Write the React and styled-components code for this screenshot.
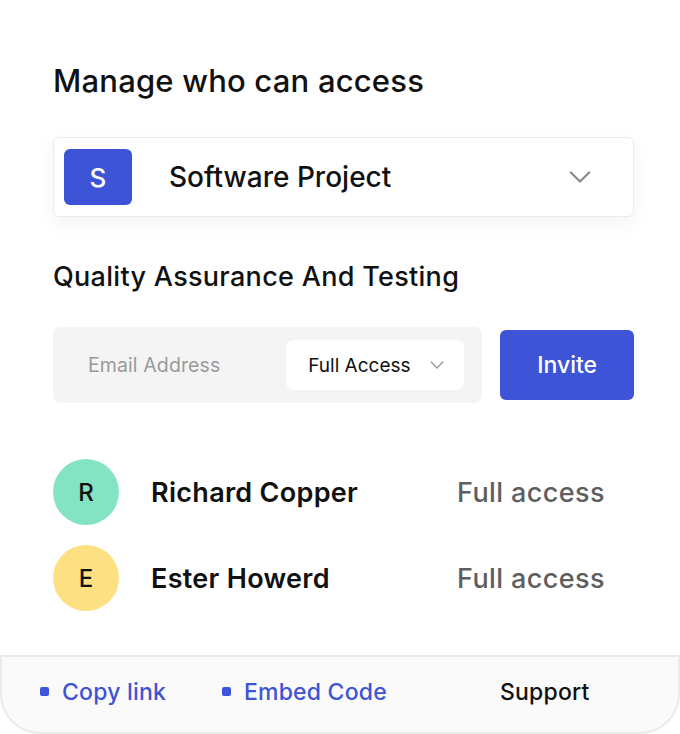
import React from 'react';
import styled, { createGlobalStyle } from 'styled-components';

const GlobalStyle = createGlobalStyle`
    html, body {
        margin: 0;
        padding: 0;
        background: #fff;
        font-family: Inter, 'Noto Sans', sans-serif;
    }
`;

const Page = styled.div`
    width: 680px;
    height: 734px;
    display: flex;
    flex-direction: column;
    box-sizing: border-box;
`;

const Body = styled.div`
    flex: 1;
    padding: 62px 46px 0 53px;
`;

const Title = styled.h1`
    font-size: 31px;
    font-weight: 500;
    color: #111;
    margin: 0;
    letter-spacing: 0.2px;
`;

const ProjectSelect = styled.div`
    margin-top: 38px;
    height: 80px;
    box-sizing: border-box;
    border: 1px solid #ececec;
    border-radius: 6px;
    box-shadow: 0 6px 22px rgba(0, 0, 0, 0.05);
    display: flex;
    align-items: center;
    padding: 0 42px 0 10px;
`;

const ProjectBadge = styled.div`
    width: 68px;
    height: 56px;
    border-radius: 6px;
    background: #3e54d6;
    color: #fff;
    font-size: 26px;
    font-weight: 500;
    display: flex;
    align-items: center;
    justify-content: center;
`;

const ProjectName = styled.div`
    flex: 1;
    margin-left: 37px;
    font-size: 28px;
    font-weight: 500;
    color: #111;
`;

const SubTitle = styled.h2`
    font-size: 27px;
    font-weight: 500;
    color: #111;
    margin: 43px 0 0 0;
    letter-spacing: 0.3px;
`;

const InviteRow = styled.div`
    display: flex;
    align-items: center;
    margin-top: 34px;
    gap: 18px;
`;

const EmailBox = styled.div`
    width: 430px;
    height: 76px;
    background: #f4f4f4;
    border-radius: 8px;
    display: flex;
    align-items: center;
    justify-content: space-between;
    padding: 0 18px 0 35px;
    box-sizing: border-box;
`;

const Placeholder = styled.span`
    font-size: 19.5px;
    color: #9a9a9a;
    letter-spacing: 0.1px;
`;

const AccessSelect = styled.div`
    width: 178px;
    height: 50px;
    background: #fff;
    border-radius: 8px;
    display: flex;
    align-items: center;
    justify-content: space-between;
    padding: 0 20px 0 22px;
    box-sizing: border-box;
    font-size: 19px;
    color: #111;
`;

const InviteButton = styled.button`
    width: 134px;
    height: 70px;
    border: none;
    border-radius: 6px;
    background: #3e54d6;
    color: #fff;
    font-family: inherit;
    font-size: 23px;
    font-weight: 500;
`;

const Members = styled.div`
    margin-top: 56px;
    display: flex;
    flex-direction: column;
    gap: 20px;
`;

const MemberRow = styled.div`
    display: flex;
    align-items: center;
`;

const Avatar = styled.div`
    width: 66px;
    height: 66px;
    border-radius: 50%;
    background: ${p => p.color};
    color: #111;
    font-size: 24px;
    font-weight: 500;
    display: flex;
    align-items: center;
    justify-content: center;
`;

const MemberName = styled.div`
    width: 306px;
    margin-left: 32px;
    font-size: 27px;
    font-weight: 600;
    color: #111;
    letter-spacing: 0.3px;
`;

const MemberAccess = styled.div`
    font-size: 27px;
    font-weight: 500;
    color: #5e5e5e;
    letter-spacing: 0.4px;
`;

const Footer = styled.div`
    height: 79px;
    box-sizing: border-box;
    background: #fafafa;
    border: 2px solid #ebebeb;
    border-bottom-left-radius: 40px;
    border-bottom-right-radius: 40px;
    display: flex;
    align-items: center;
    padding: 0 0 6px 38px;
`;

const FooterLink = styled.a`
    display: flex;
    align-items: center;
    gap: 13px;
    width: ${p => p.width}px;
    font-size: 23px;
    font-weight: 500;
    letter-spacing: 0.2px;
    color: ${p => (p.plain ? '#111' : '#3e54d6')};
    text-decoration: none;
    &::before {
        content: '';
        display: ${p => (p.plain ? 'none' : 'block')};
        width: 9px;
        height: 9px;
        border-radius: 2px;
        background: #3e54d6;
    }
`;

const Chevron = ({ size = 24, color = '#8a8a8a' }) => (
    <svg width={size} height={size} viewBox="0 0 24 24" fill="none">
        <path d="M2 7l10 10L22 7" stroke={color} strokeWidth="2.4" strokeLinecap="round" strokeLinejoin="round" />
    </svg>
);

const members = [
    { initial: 'R', name: 'Richard Copper', color: '#84e3c2' },
    { initial: 'E', name: 'Ester Howerd', color: '#fde082' },
];

const App = () => {
    return (
        <Page>
            <GlobalStyle />
            <Body>
                <Title>Manage who can access</Title>

                <ProjectSelect>
                    <ProjectBadge>S</ProjectBadge>
                    <ProjectName>Software Project</ProjectName>
                    <Chevron size={22} />
                </ProjectSelect>

                <SubTitle>Quality Assurance And Testing</SubTitle>

                <InviteRow>
                    <EmailBox>
                        <Placeholder>Email Address</Placeholder>
                        <AccessSelect>
                            Full Access
                            <Chevron size={14} color="#999" />
                        </AccessSelect>
                    </EmailBox>
                    <InviteButton>Invite</InviteButton>
                </InviteRow>

                <Members>
                    {members.map(m => (
                        <MemberRow key={m.name}>
                            <Avatar color={m.color}>{m.initial}</Avatar>
                            <MemberName>{m.name}</MemberName>
                            <MemberAccess>Full access</MemberAccess>
                        </MemberRow>
                    ))}
                </Members>
            </Body>

            <Footer>
                <FooterLink width={182}>Copy link</FooterLink>
                <FooterLink width={278}>Embed Code</FooterLink>
                <FooterLink plain>Support</FooterLink>
            </Footer>
        </Page>
    );
};

export default App;
